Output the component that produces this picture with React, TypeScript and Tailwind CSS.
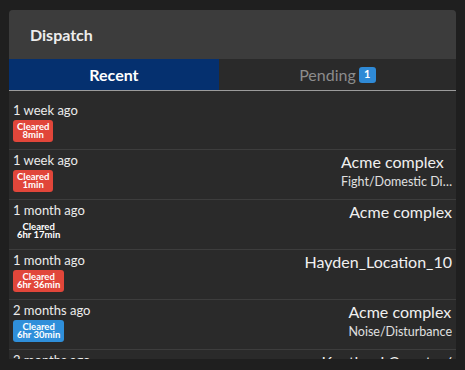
import React from "react";

type Item = {
  ago: string;
  cleared: string;
  tone: "red" | "blue" | "none";
  location?: string;
  desc?: string;
};

const items: Item[] = [
  { ago: "1 week ago", cleared: "8min", tone: "red" },
  { ago: "1 week ago", cleared: "1min", tone: "red", location: "Acme complex", desc: "Fight/Domestic Disturbance" },
  { ago: "1 month ago", cleared: "6hr 17min", tone: "none", location: "Acme complex" },
  { ago: "1 month ago", cleared: "6hr 36min", tone: "red", location: "Hayden_Location_10" },
  { ago: "2 months ago", cleared: "6hr 30min", tone: "blue", location: "Acme complex", desc: "Noise/Disturbance" },
  { ago: "2 months ago", cleared: "4min", tone: "red", location: "Kentland Country/", desc: "Alarm" },
];

const toneClass = {
  red: "bg-[#e1463a]",
  blue: "bg-[#2f8fda]",
  none: "bg-transparent",
};

function Row({ item }: { item: Item }) {
  return (
    <div className="flex h-[50px] shrink-0 justify-between border-b border-[#3d3d3d] pl-[4px] pr-[4px] pt-[2px]">
      <div className="flex flex-col items-start">
        <div className="text-[13px] leading-[16px] text-[#ececec]">{item.ago}</div>
        <div
          className={`mt-[2px] flex flex-col items-center rounded-[3px] px-[4px] py-[3px] text-[9.5px] font-bold leading-[8px] text-white ${toneClass[item.tone]}`}
        >
          <span>Cleared</span>
          <span>{item.cleared}</span>
        </div>
      </div>
      {item.location && (
        <div className="flex max-w-[200px] flex-col items-start">
          <div className="text-[16px] leading-[20px] text-[#f0f0f0]">{item.location}</div>
          {item.desc && (
            <div className="mt-[2px] max-w-[111px] truncate text-[12.5px] leading-[16px] text-[#e0e0e0]">
              {item.desc}
            </div>
          )}
        </div>
      )}
    </div>
  );
}

export default function App() {
  return (
    <div className="h-[370px] w-[465px] bg-[#1f1f1f] pl-[9px] pr-[9px] pt-[10px] font-['Lato',sans-serif]">
      <div className="flex h-[349px] flex-col overflow-hidden rounded-t-[4px] bg-[#2a2a2a]">
        {/* header */}
        <div className="flex h-[49px] shrink-0 items-center bg-[#3c3c3c] pl-[21px] text-[16px] font-bold text-[#ededed]">
          Dispatch
        </div>

        {/* tabs */}
        <div className="flex h-[32px] shrink-0 border-b border-[#9b9b9b]">
          <button className="flex flex-auto items-center justify-center bg-[#05306f] text-[16px] font-bold text-white">
            Recent
          </button>
          <button className="flex flex-auto items-center justify-center gap-[3px] text-[16px] text-[#8c8c8c]">
            Pending
            <span className="flex h-[16px] w-[17px] items-center justify-center rounded-[3px] bg-[#2f8ad6] text-[11px] font-bold text-white">
              1
            </span>
          </button>
        </div>

        {/* list */}
        <div className="flex flex-1 flex-col overflow-hidden pt-[9px]">
          {items.map((it, i) => (
            <Row key={i} item={it} />
          ))}
        </div>
      </div>
    </div>
  );
}
